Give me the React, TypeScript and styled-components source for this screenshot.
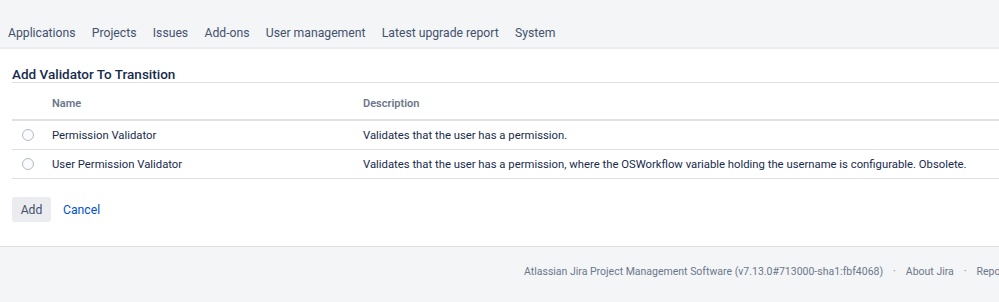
import React from "react";
import styled, { createGlobalStyle } from "styled-components";

const Global = createGlobalStyle`
  html, body { margin: 0; padding: 0; background: #ffffff; }
  body { font-family: Roboto, "Liberation Sans", Arial, sans-serif; color: #172b4d; overflow: hidden; }
`;

const Page = styled.div`
  width: 999px;
  height: 302px;
  display: flex;
  flex-direction: column;
  overflow: hidden;
`;

const NavBar = styled.nav`
  height: 49px;
  background: #f4f5f7;
  border-bottom: 2px solid #ebecf0;
  display: flex;
  align-items: flex-end;
  padding: 0 0 6px 8px;
  box-sizing: border-box;
  gap: 16.3px;
  flex: none;
`;

const NavItem = styled.a`
  font-size: 12.2px;
  color: #42526e;
  text-decoration: none;
  line-height: 16px;
`;

const Main = styled.main`
  background: #ffffff;
  padding: 17px 0 0 12px;
  height: 197px;
  box-sizing: border-box;
  flex: none;
`;

const Heading = styled.h2`
  margin: 0;
  font-size: 13.5px;
  font-weight: 500;
  line-height: 16px;
  color: #172b4d;
  border-bottom: 1px solid #dfe1e6;
`;

const Table = styled.table`
  width: 100%;
  border-collapse: collapse;
  table-layout: fixed;
`;

const Th = styled.th<{ $w?: string }>`
  text-align: left;
  font-size: 11px;
  font-weight: 600;
  color: #6b778c;
  height: 37px;
  padding: 4px 0 0 0;
  border-bottom: 2px solid #dfe1e6;
  width: ${(p) => p.$w || "auto"};
  box-sizing: border-box;
`;

const Td = styled.td`
  font-size: 11.3px;
  color: #172b4d;
  height: 28px;
  padding: 0;
  border-bottom: 1px solid #dfe1e6;
  white-space: nowrap;
`;

const Radio = styled.span`
  display: block;
  width: 10px;
  height: 10px;
  border: 1px solid #b3b9c4;
  border-radius: 50%;
  margin-left: 10px;
  background: #fafbfc;
`;

const Actions = styled.div`
  display: flex;
  align-items: center;
  gap: 12px;
  margin-top: 18px;
`;

const Button = styled.button`
  font-family: inherit;
  font-size: 12.2px;
  color: #42526e;
  background: #ebecf0;
  border: none;
  border-radius: 3px;
  height: 25px;
  width: 39px;
  padding: 0;
  cursor: pointer;
`;

const LinkButton = styled.a`
  font-size: 12.2px;
  color: #0052cc;
  text-decoration: none;
`;

const Footer = styled.footer`
  flex: 1;
  background: #f4f5f7;
  border-top: 1px solid #dfe1e6;
  display: flex;
  align-items: center;
  padding-left: 524px;
  padding-bottom: 7px;
  white-space: nowrap;
  font-size: 10.5px;
  color: #6b778c;
  gap: 10px;
`;

const FooterItem = styled.span``;

const Dot = styled.span`
  color: #6b778c;
`;

const rows = [
  { name: "Permission Validator", desc: "Validates that the user has a permission." },
  {
    name: "User Permission Validator",
    desc: "Validates that the user has a permission, where the OSWorkflow variable holding the username is configurable. Obsolete.",
  },
];

export default function App() {
  return (
    <>
      <Global />
      <Page>
        <NavBar>
          {["Applications", "Projects", "Issues", "Add-ons", "User management", "Latest upgrade report", "System"].map((t) => (
            <NavItem key={t}>{t}</NavItem>
          ))}
        </NavBar>
        <Main>
          <Heading>Add Validator To Transition</Heading>
          <Table>
            <thead>
              <tr>
                <Th $w="40px"></Th>
                <Th $w="311px">Name</Th>
                <Th>Description</Th>
              </tr>
            </thead>
            <tbody>
              {rows.map((r) => (
                <tr key={r.name}>
                  <Td>
                    <Radio />
                  </Td>
                  <Td>{r.name}</Td>
                  <Td>{r.desc}</Td>
                </tr>
              ))}
            </tbody>
          </Table>
          <Actions>
            <Button>Add</Button>
            <LinkButton>Cancel</LinkButton>
          </Actions>
        </Main>
        <Footer>
          <FooterItem>Atlassian Jira Project Management Software (v7.13.0#713000-sha1:fbf4068)</FooterItem>
          <Dot>·</Dot>
          <FooterItem>About Jira</FooterItem>
          <Dot>·</Dot>
          <FooterItem>Report a problem</FooterItem>
        </Footer>
      </Page>
    </>
  );
}
